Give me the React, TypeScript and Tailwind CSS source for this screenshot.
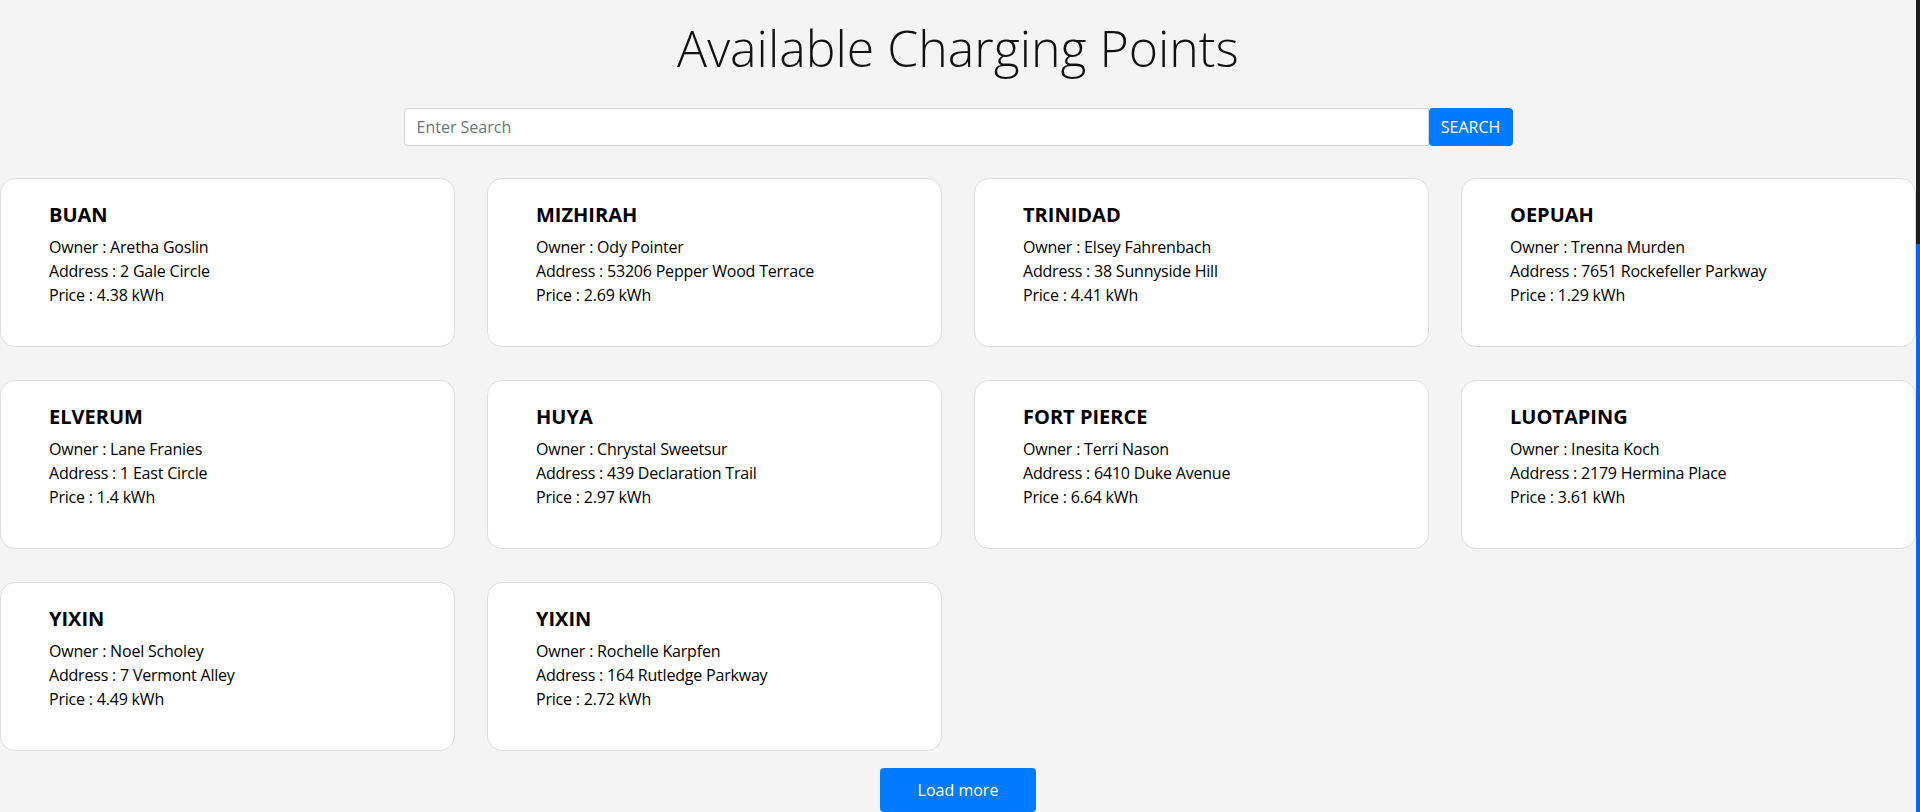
type Station = {
  city: string
  owner: string
  address: string
  price: string
}

const stations: Station[] = [
  { city: 'BUAN', owner: 'Aretha Goslin', address: '2 Gale Circle', price: '4.38' },
  { city: 'MIZHIRAH', owner: 'Ody Pointer', address: '53206 Pepper Wood Terrace', price: '2.69' },
  { city: 'TRINIDAD', owner: 'Elsey Fahrenbach', address: '38 Sunnyside Hill', price: '4.41' },
  { city: 'OEPUAH', owner: 'Trenna Murden', address: '7651 Rockefeller Parkway', price: '1.29' },
  { city: 'ELVERUM', owner: 'Lane Franies', address: '1 East Circle', price: '1.4' },
  { city: 'HUYA', owner: 'Chrystal Sweetsur', address: '439 Declaration Trail', price: '2.97' },
  { city: 'FORT PIERCE', owner: 'Terri Nason', address: '6410 Duke Avenue', price: '6.64' },
  { city: 'LUOTAPING', owner: 'Inesita Koch', address: '2179 Hermina Place', price: '3.61' },
  { city: 'YIXIN', owner: 'Noel Scholey', address: '7 Vermont Alley', price: '4.49' },
  { city: 'YIXIN', owner: 'Rochelle Karpfen', address: '164 Rutledge Parkway', price: '2.72' },
]

const StationCard: React.FC<{ station: Station }> = ({ station }) => {
  return (
    <div className="h-[169px] rounded-[15px] border border-[#dedede] bg-white pl-12 pt-6 text-black">
      <h5 className="text-[20px] leading-[24px] font-bold">{station.city}</h5>
      <div className="mt-2 text-[16px] leading-[24px] tracking-[-0.2px]">
        <p>Owner : {station.owner}</p>
        <p>Address : {station.address}</p>
        <p>Price : {station.price} kWh</p>
      </div>
    </div>
  )
}

export default function App() {
  return (
    <div className="flex h-[812px] overflow-hidden bg-[#f4f4f4] font-['Open_Sans',_'Noto_Sans',sans-serif]">
      <main className="flex flex-1 flex-col items-center pt-[18px]">
        <h1 className="text-[50px] leading-[60px] font-light text-[#111]">Available Charging Points</h1>

        <form className="mt-[30px] flex h-[38px] w-[1109px]" onSubmit={(e) => e.preventDefault()}>
          <input
            type="text"
            placeholder="Enter Search"
            className="flex-1 rounded-l-[4px] border border-[#ced4da] bg-white px-3 text-[16px] text-[#495057] outline-none placeholder:text-[#6c757d]"
          />
          <button type="submit" className="w-[84px] rounded-[4px] bg-[#007bff] text-[16px] text-white">
            SEARCH
          </button>
        </form>

        <div className="mt-[32px] grid w-full grid-cols-4 gap-x-8 gap-y-[33px]">
          {stations.map((s, i) => (
            <StationCard key={i} station={s} />
          ))}
        </div>

        <button className="mt-[17px] h-[44px] w-[156px] shrink-0 rounded-[4px] bg-[#007bff] text-[16px] text-white">
          Load more
        </button>
      </main>

      <div className="flex w-1 flex-col">
        <div className="h-[244px] bg-[#1e1e22]" />
        <div className="flex-1 bg-[#0a66e8]" />
      </div>
    </div>
  )
}
